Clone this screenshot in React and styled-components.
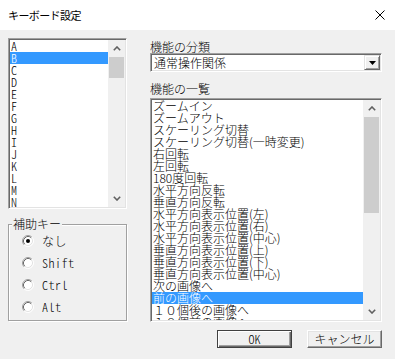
import React from "react";
import styled, { createGlobalStyle } from "styled-components";

const GlobalStyle = createGlobalStyle`
  html, body {
    margin: 0;
    padding: 0;
    background: #f0f0f0;
  }
  body {
    font-family: "Noto Sans CJK JP", sans-serif;
    font-size: 12px;
    font-weight: 300;
    color: #000;
  }
`;

const Dialog = styled.div`
  width: 395px;
  height: 359px;
  display: flex;
  flex-direction: column;
  background: #f0f0f0;
  overflow: hidden;
`;

const TitleBar = styled.div`
  height: 30px;
  flex: none;
  background: #fff;
  display: flex;
  align-items: center;
  justify-content: space-between;
  padding: 0 10px 0 8px;
`;

const Title = styled.span`
  font-size: 11px;
  font-weight: 400;
  letter-spacing: -0.6px;
  line-height: 12px;
`;

const Body = styled.div`
  flex: 1;
  display: flex;
  flex-direction: column;
  padding: 8px 13px 0 8px;
`;

const Columns = styled.div`
  display: flex;
  gap: 23px;
`;

const LeftColumn = styled.div`
  width: 119px;
  display: flex;
  flex-direction: column;
`;

const RightColumn = styled.div`
  width: 232px;
  display: flex;
  flex-direction: column;
`;

const Sunken = styled.div`
  box-sizing: border-box;
  background: #fff;
  border: 1px solid;
  border-color: #a0a0a0 #fff #fff #a0a0a0;
  box-shadow: inset 1px 1px #696969, inset -1px -1px #e3e3e3;
  padding: 1px;
`;

const ListBox = styled(Sunken)`
  height: ${(p) => p.$height}px;
  display: flex;
  overflow: hidden;
`;

const Items = styled.div`
  flex: 1;
  min-width: 0;
  overflow: hidden;
`;

// latin-only lists get half-width glyphs like the old bitmap gothic
const Item = styled.div`
  height: 12px;
  line-height: 12px;
  font-size: 12px;
  padding-left: 1px;
  white-space: nowrap;
  font-feature-settings: ${(p) => (p.$half ? `"hwid" 1` : "normal")};
  background: ${(p) => (p.$selected ? "#3399ff" : "transparent")};
  color: ${(p) => (p.$selected ? "#fff" : "#000")};
`;

const ScrollBar = styled.div`
  width: 17px;
  flex: none;
  background: #f0f0f0;
  display: flex;
  flex-direction: column;
`;

const ScrollArrow = styled.div`
  height: 17px;
  flex: none;
  display: flex;
  align-items: center;
  justify-content: center;
`;

const Thumb = styled.div`
  height: ${(p) => p.$size}px;
  margin: ${(p) => p.$offset}px 1px 0 1px;
  background: #cdcdcd;
  flex: none;
`;

const Track = styled.div`
  flex: 1;
`;

const Label = styled.div`
  line-height: 12px;
  font-size: 12px;
  padding-top: ${(p) => p.$top}px;
  padding-bottom: ${(p) => p.$bottom}px;
`;

const Combo = styled(Sunken)`
  height: 19px;
  display: flex;
  align-items: center;
  justify-content: space-between;
  padding: 1px 1px 1px 3px;
`;

const ComboText = styled.span`
  font-size: 12px;
  line-height: 12px;
`;

const DropButton = styled.div`
  width: 16px;
  height: 15px;
  box-sizing: border-box;
  background: #f0f0f0;
  border: 1px solid;
  border-color: #e3e3e3 #696969 #696969 #e3e3e3;
  box-shadow: inset 1px 1px #fff, inset -1px -1px #a0a0a0;
  display: flex;
  align-items: center;
  justify-content: center;
`;

const GroupBox = styled.div`
  position: relative;
  margin-top: 15px;
  height: 97px;
  box-sizing: border-box;
  border: 1px solid #a0a0a0;
  box-shadow: inset 1px 1px #fff, 1px 1px #fff;
  padding: 5px 0 0 13px;
`;

const Legend = styled.span`
  position: absolute;
  top: -7px;
  left: 3px;
  padding: 0 1px;
  background: #f0f0f0;
  font-size: 12px;
  line-height: 12px;
`;

const RadioRow = styled.label`
  height: 22px;
  display: flex;
  align-items: center;
  gap: 8px;
  font-size: 12px;
  line-height: 12px;
  font-feature-settings: "hwid" 1;
  letter-spacing: 0.5px;
`;

const ButtonRow = styled.div`
  display: flex;
  justify-content: flex-end;
  gap: 15px;
  margin-top: 8px;
`;

const Button = styled.div`
  width: 75px;
  height: 18px;
  box-sizing: border-box;
  background: #f0f0f0;
  display: flex;
  align-items: center;
  justify-content: center;
  font-size: 12px;
  line-height: 12px;
  font-feature-settings: "hwid" 1;
  border: 1px solid;
  border-color: ${(p) =>
    p.$default ? "#404040" : "#fff #696969 #696969 #fff"};
  box-shadow: ${(p) =>
    p.$default
      ? "inset 1px 1px #fff, inset -1px -1px #696969, inset -2px -2px #a0a0a0"
      : "inset -1px -1px #a0a0a0, inset 1px 1px #e3e3e3"};
`;

const Chevron = ({ down }) => (
  <svg width="8" height="5" viewBox="0 0 8 5">
    <path
      d={down ? "M0.8 0.8 L4 4 L7.2 0.8" : "M0.8 4.2 L4 1 L7.2 4.2"}
      fill="none"
      stroke="#606060"
      strokeWidth="1.6"
    />
  </svg>
);

const Scroll = ({ offset, size }) => (
  <ScrollBar>
    <ScrollArrow>
      <Chevron />
    </ScrollArrow>
    <Thumb $offset={offset} $size={size} />
    <Track />
    <ScrollArrow>
      <Chevron down />
    </ScrollArrow>
  </ScrollBar>
);

const Radio = ({ checked }) => (
  <svg width="12" height="12" viewBox="0 0 12 12">
    <circle cx="6" cy="6" r="5" fill="#fff" />
    <path d="M2.11 9.89 A5.5 5.5 0 0 1 9.89 2.11" fill="none" stroke="#a0a0a0" />
    <path d="M9.89 2.11 A5.5 5.5 0 0 1 2.11 9.89" fill="none" stroke="#fff" />
    <path d="M2.82 9.18 A4.5 4.5 0 0 1 9.18 2.82" fill="none" stroke="#696969" />
    <path d="M9.18 2.82 A4.5 4.5 0 0 1 2.82 9.18" fill="none" stroke="#e3e3e3" />
    {checked && <circle cx="6" cy="6" r="2" fill="#000" />}
  </svg>
);

const keys = "ABCDEFGHIJKLMN".split("");

const functions = [
  "ズームイン",
  "ズームアウト",
  "スケーリング切替",
  "スケーリング切替(一時変更)",
  "右回転",
  "左回転",
  "180度回転",
  "水平方向反転",
  "垂直方向反転",
  "水平方向表示位置(左)",
  "水平方向表示位置(右)",
  "水平方向表示位置(中心)",
  "垂直方向表示位置(上)",
  "垂直方向表示位置(下)",
  "垂直方向表示位置(中心)",
  "次の画像へ",
  "前の画像へ",
  "１０個後の画像へ",
  "１０個前の画像へ",
];

const modifiers = ["なし", "Shift", "Ctrl", "Alt"];

const App = () => (
  <>
    <GlobalStyle />
    <Dialog>
      <TitleBar>
        <Title>キーボード設定</Title>
        <svg width="10" height="10" viewBox="0 0 10 10">
          <path d="M0.5 0.5 L9.5 9.5 M9.5 0.5 L0.5 9.5" stroke="#000" strokeWidth="1" />
        </svg>
      </TitleBar>
      <Body>
        <Columns>
          <LeftColumn>
            <ListBox $height={171}>
              <Items>
                {keys.map((k) => (
                  <Item key={k} $half $selected={k === "B"}>
                    {k}
                  </Item>
                ))}
              </Items>
              <Scroll offset={0} size={21} />
            </ListBox>
            <GroupBox>
              <Legend>補助キー</Legend>
              {modifiers.map((m, i) => (
                <RadioRow key={m}>
                  <Radio checked={i === 0} />
                  {m}
                </RadioRow>
              ))}
            </GroupBox>
          </LeftColumn>
          <RightColumn>
            <Label $top={3} $bottom={0}>
              機能の分類
            </Label>
            <Combo>
              <ComboText>通常操作関係</ComboText>
              <DropButton>
                <svg width="7" height="4" viewBox="0 0 7 4">
                  <path d="M0 0 H7 L3.5 4 Z" fill="#000" />
                </svg>
              </DropButton>
            </Combo>
            <Label $top={11} $bottom={3}>
              機能の一覧
            </Label>
            <ListBox $height={224}>
              <Items>
                {functions.map((f) => (
                  <Item key={f} $selected={f === "前の画像へ"}>
                    {f}
                  </Item>
                ))}
              </Items>
              <Scroll offset={0} size={96} />
            </ListBox>
          </RightColumn>
        </Columns>
        <ButtonRow>
          <Button $default>OK</Button>
          <Button>キャンセル</Button>
        </ButtonRow>
      </Body>
    </Dialog>
  </>
);

export default App;
